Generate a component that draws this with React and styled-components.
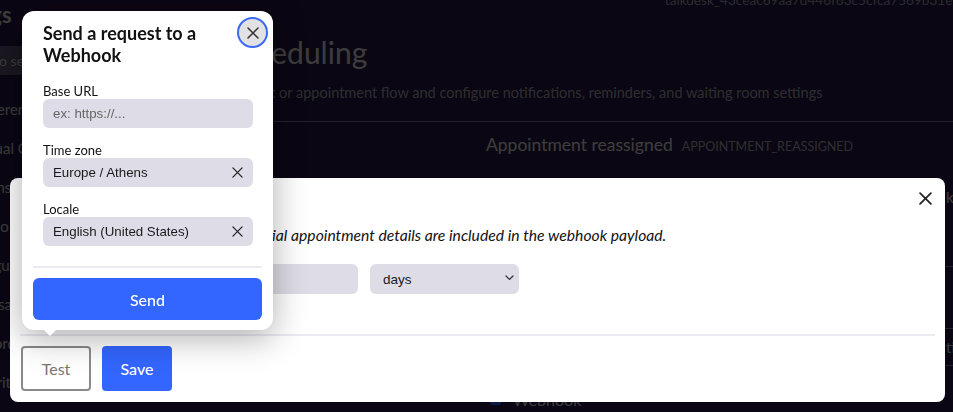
import React from "react";
import styled, { createGlobalStyle } from "styled-components";
import { Copy } from "lucide-react";

const GlobalStyle = createGlobalStyle`
  html, body {
    margin: 0;
    padding: 0;
  }
  body {
    background: #2c1a4c;
    font-family: Lato, "Noto Sans", sans-serif;
    overflow: hidden;
  }
  * {
    box-sizing: border-box;
  }
`;

/* ---------- background page ---------- */

const Page = styled.div`
  width: 953px;
  height: 412px;
  overflow: hidden;
  background: #2c1a4c;
  color: #f0f0f0;
`;

const Layout = styled.div`
  display: flex;
  margin: -10px 0 0 -72px;
`;

const Sidebar = styled.aside`
  width: 290px;
  flex-shrink: 0;
  display: flex;
  flex-direction: column;
`;

const SidebarTitle = styled.h1`
  margin: 11px 0 0;
  padding-left: 5px;
  font-size: 22px;
  line-height: 28px;
  font-weight: 700;
`;

const Search = styled.div`
  margin-top: 17px;
  height: 29px;
  width: 200px;
  display: flex;
  align-items: center;
  padding-left: 33px;
  background: #6a5c80;
  border-radius: 4px;
  font-size: 14px;
  color: #e4e4e4;
`;

const NavList = styled.nav`
  display: flex;
  flex-direction: column;
  margin-top: 14px;
  padding-left: 42px;
`;

const NavItem = styled.div`
  height: 39px;
  display: flex;
  align-items: center;
  font-size: 15px;
  color: #e8e8e8;
`;

const Main = styled.main`
  flex: 1;
  display: flex;
  flex-direction: column;
  padding-left: 6px;
`;

const TopBar = styled.div`
  height: 20px;
  display: flex;
  justify-content: flex-end;
  align-items: center;
  gap: 15px;
  padding-right: 6px;
  font-size: 13.6px;
  color: #a8a8b8;
`;

const Heading = styled.h2`
  margin: 23px 0 0;
  font-size: 30px;
  line-height: 38px;
  font-weight: 400;
`;

const Subtitle = styled.p`
  margin: 12px 0 0;
  padding-left: 6px;
  font-size: 14.5px;
  line-height: 20px;
  color: #b4b4bc;
`;

const Rule = styled.hr`
  margin: 18px 0 0;
  border: none;
  border-top: 1px solid #908cb0;
`;

const Split = styled.div`
  display: grid;
  grid-template-columns: 246px 1fr;
`;

const EventList = styled.div`
  display: flex;
  flex-direction: column;
`;

const DetailPanel = styled.section`
  padding: 12px 0 0 16px;
`;

const DetailHeader = styled.div`
  display: flex;
  align-items: baseline;
  gap: 9px;
  height: 26px;
`;

const DetailTitle = styled.span`
  font-size: 17.5px;
  color: #f2f2f2;
`;

const EventCode = styled.span`
  font-size: 12.5px;
  color: #b8b8b8;
  text-transform: uppercase;
`;

const ChannelRow = styled.div`
  display: grid;
  grid-template-columns: 460px 1fr;
  align-items: ${(p) => p.$align || "center"};
  height: ${(p) => p.$h}px;
  padding-top: ${(p) => p.$pt || 0}px;
  border-bottom: 1px solid #8a86a8;
  font-size: 15px;
  white-space: nowrap;
`;

const ChannelName = styled.div`
  display: flex;
  align-items: center;
  gap: 12px;
  padding-left: 4px;
  font-size: 16px;
  color: #e8e8e8;
`;

const ChannelIcon = styled.span`
  width: 11px;
  height: 11px;
  border-radius: 2px;
  background: #3366ff;
`;

/* ---------- overlay ---------- */

const Backdrop = styled.div`
  position: fixed;
  inset: 0;
  background: rgba(0, 0, 0, 0.75);
`;

const Modal = styled.div`
  position: absolute;
  left: 10px;
  top: 178px;
  width: 935px;
  height: 224px;
  background: #fff;
  border-radius: 8px;
  padding: 10px 10px 11px;
  display: flex;
  flex-direction: column;
  color: #111;
`;

const ModalHeader = styled.div`
  margin-top: -1px;
  height: 22px;
  display: flex;
  align-items: center;
  justify-content: space-between;
  padding: 0 3px 0 10px;
`;

const ModalTitle = styled.h3`
  margin: 0;
  font-size: 18px;
  font-weight: 700;
`;

const IconButton = styled.button`
  border: none;
  background: transparent;
  padding: 0;
  display: flex;
  align-items: center;
  justify-content: center;
  cursor: pointer;
  color: #222;
`;

const ModalBody = styled.div`
  padding: 0 10px;
`;

const Description = styled.p`
  margin: 15px 0 0;
  padding-left: 3px;
  font-size: 15.7px;
  line-height: 22px;
  font-style: italic;
  white-space: nowrap;
`;

const FieldRow = styled.div`
  display: flex;
  gap: 12px;
  margin-top: 18px;
`;

const FieldBox = styled.div`
  position: relative;
  width: ${(p) => p.$w}px;
  height: ${(p) => p.$h || 29}px;
  display: flex;
  align-items: center;
  background: #dedce6;
  border-radius: 6px;
  padding: 0 10px;
`;

const TextInput = styled.input`
  flex: 1;
  min-width: 0;
  border: none;
  outline: none;
  background: transparent;
  padding: 0;
  font-family: "Liberation Sans", Arial, sans-serif;
  font-size: 13.3px;
  color: #1a1a1a;

  &::placeholder {
    color: #666;
  }
`;

const Select = styled.select`
  appearance: none;
  width: 100%;
  height: 100%;
  border: none;
  outline: none;
  background: transparent;
  padding: 0 0 0 3px;
  font-family: "Liberation Sans", Arial, sans-serif;
  font-size: 13.5px;
  color: #1a1a1a;
`;

const Chevron = styled.svg`
  position: absolute;
  right: 5px;
  top: 11px;
  pointer-events: none;
`;

const ModalDivider = styled.div`
  margin-top: 40px;
  height: 2px;
  background: #eceaf1;
`;

const Footer = styled.div`
  display: flex;
  gap: 11px;
  margin-top: 10px;
  padding-left: 1px;
`;

const Button = styled.button`
  width: 70px;
  height: 45px;
  border-radius: 4px;
  font-family: Lato, sans-serif;
  font-size: 16px;
  cursor: pointer;
  border: ${(p) => (p.$primary ? "none" : "2px solid #8a8a8a")};
  background: ${(p) => (p.$primary ? "#3366ff" : "#fff")};
  color: ${(p) => (p.$primary ? "#fff" : "#777")};
  font-weight: ${(p) => (p.$primary ? 500 : 400)};
`;

/* ---------- popover ---------- */

const Popover = styled.div`
  position: absolute;
  left: 22px;
  top: 11px;
  width: 251px;
  height: 319px;
  background: #fff;
  border-radius: 12px;
  padding: 11px 11px 10px;
  box-shadow: 0 8px 34px rgba(0, 0, 0, 0.32);
  color: #111;

  &::after {
    content: "";
    position: absolute;
    left: 22px;
    bottom: -6px;
    border-left: 6px solid transparent;
    border-right: 6px solid transparent;
    border-top: 6px solid #fff;
  }
`;

const CloseCircle = styled.button`
  position: absolute;
  top: 6px;
  right: 5px;
  width: 31px;
  height: 31px;
  border-radius: 50%;
  border: 2px solid #3b69f5;
  background: #e2e2e5;
  padding: 0;
  display: flex;
  align-items: center;
  justify-content: center;
  color: #333;
`;

const PopoverTitle = styled.h3`
  margin: 0;
  padding: 0 40px 0 10px;
  font-size: 18px;
  line-height: 22px;
  font-weight: 700;
`;

const Fields = styled.div`
  display: flex;
  flex-direction: column;
  gap: 15px;
  margin-top: 18px;
  padding: 0 10px;
`;

const Field = styled.label`
  display: flex;
  flex-direction: column;
`;

const Label = styled.span`
  font-size: 13px;
  line-height: 15px;
`;

const PopDivider = styled.div`
  margin-top: 20px;
  height: 2px;
  background: #eceaf1;
`;

const SendButton = styled.button`
  display: block;
  width: 100%;
  height: 42px;
  margin-top: 10px;
  border: none;
  border-radius: 6px;
  background: #3366ff;
  color: #fff;
  font-family: Lato, sans-serif;
  font-size: 16px;
  font-weight: 500;
  cursor: pointer;
`;

const XIcon = ({ size = 12, stroke = 1.5 }) => (
  <svg width={size} height={size} viewBox="0 0 12 12" fill="none">
    <path
      d="M1 1L11 11M11 1L1 11"
      stroke="currentColor"
      strokeWidth={stroke}
      strokeLinecap="round"
    />
  </svg>
);

const navItems = [
  "Preferences",
  "Virtual Care",
  "Teams",
  "Audio & Video",
  "Languages",
  "Messages",
  "Records",
  "Priorities",
];

const App = () => {
  return (
    <>
      <GlobalStyle />
      <Page>
        <Layout>
          <Sidebar>
            <SidebarTitle>Settings</SidebarTitle>
            <Search>Type to search</Search>
            <NavList>
              {navItems.map((item) => (
                <NavItem key={item}>{item}</NavItem>
              ))}
            </NavList>
          </Sidebar>
          <Main>
            <TopBar>
              <span>talkdesk_43ceac69aa7d446f63c5cfca7569b31e</span>
              <Copy size={14} />
            </TopBar>
            <Heading>Scheduling</Heading>
            <Subtitle>
              Patient or appointment flow and configure notifications,
              reminders, and waiting room settings
            </Subtitle>
            <Rule />
            <Split>
              <EventList />
              <DetailPanel>
                <DetailHeader>
                  <DetailTitle>Appointment reassigned</DetailTitle>
                  <EventCode>APPOINTMENT_REASSIGNED</EventCode>
                </DetailHeader>
                <ChannelRow $h={107} $align="start" $pt={28}>
                  <ChannelName>Email</ChannelName>
                  <span>kiosk</span>
                </ChannelRow>
                <ChannelRow $h={62}>
                  <ChannelName>SMS</ChannelName>
                  <span />
                </ChannelRow>
                <ChannelRow $h={37}>
                  <ChannelName>Push</ChannelName>
                  <span>timing</span>
                </ChannelRow>
                <ChannelRow $h={62} $align="start" $pt={24}>
                  <ChannelName>
                    <ChannelIcon />
                    Webhook
                  </ChannelName>
                  <span />
                </ChannelRow>
              </DetailPanel>
            </Split>
          </Main>
        </Layout>
      </Page>

      <Backdrop>
        <Modal>
          <ModalHeader>
            <ModalTitle>Webhook</ModalTitle>
            <IconButton aria-label="Close">
              <XIcon size={13} stroke={1.6} />
            </IconButton>
          </ModalHeader>
          <ModalBody>
            <Description>
              When this is enabled, only the essential appointment details are
              included in the webhook payload.
            </Description>
            <FieldRow>
              <FieldBox $w={328} $h={30}>
                <TextInput defaultValue="" />
              </FieldBox>
              <FieldBox $w={149} $h={30}>
                <Select defaultValue="days">
                  <option value="days">days</option>
                  <option value="hours">hours</option>
                </Select>
                <Chevron width="9" height="6" viewBox="0 0 9 6" fill="none">
                  <path
                    d="M1 1L4.5 4.5L8 1"
                    stroke="#333"
                    strokeWidth="1.2"
                    strokeLinecap="round"
                  />
                </Chevron>
              </FieldBox>
            </FieldRow>
          </ModalBody>
          <ModalDivider />
          <Footer>
            <Button>Test</Button>
            <Button $primary>Save</Button>
          </Footer>
        </Modal>

        <Popover>
          <CloseCircle aria-label="Close">
            <XIcon size={12} stroke={1.5} />
          </CloseCircle>
          <PopoverTitle>Send a request to a Webhook</PopoverTitle>
          <Fields>
            <Field>
              <Label>Base URL</Label>
              <FieldBox $w={210}>
                <TextInput placeholder="ex: https://..." />
              </FieldBox>
            </Field>
            <Field>
              <Label>Time zone</Label>
              <FieldBox $w={210}>
                <TextInput defaultValue="Europe / Athens" />
                <IconButton aria-label="Clear">
                  <XIcon size={11} stroke={1.4} />
                </IconButton>
              </FieldBox>
            </Field>
            <Field>
              <Label>Locale</Label>
              <FieldBox $w={210}>
                <TextInput defaultValue="English (United States)" />
                <IconButton aria-label="Clear">
                  <XIcon size={11} stroke={1.4} />
                </IconButton>
              </FieldBox>
            </Field>
          </Fields>
          <PopDivider />
          <SendButton>Send</SendButton>
        </Popover>
      </Backdrop>
    </>
  );
};

export default App;
